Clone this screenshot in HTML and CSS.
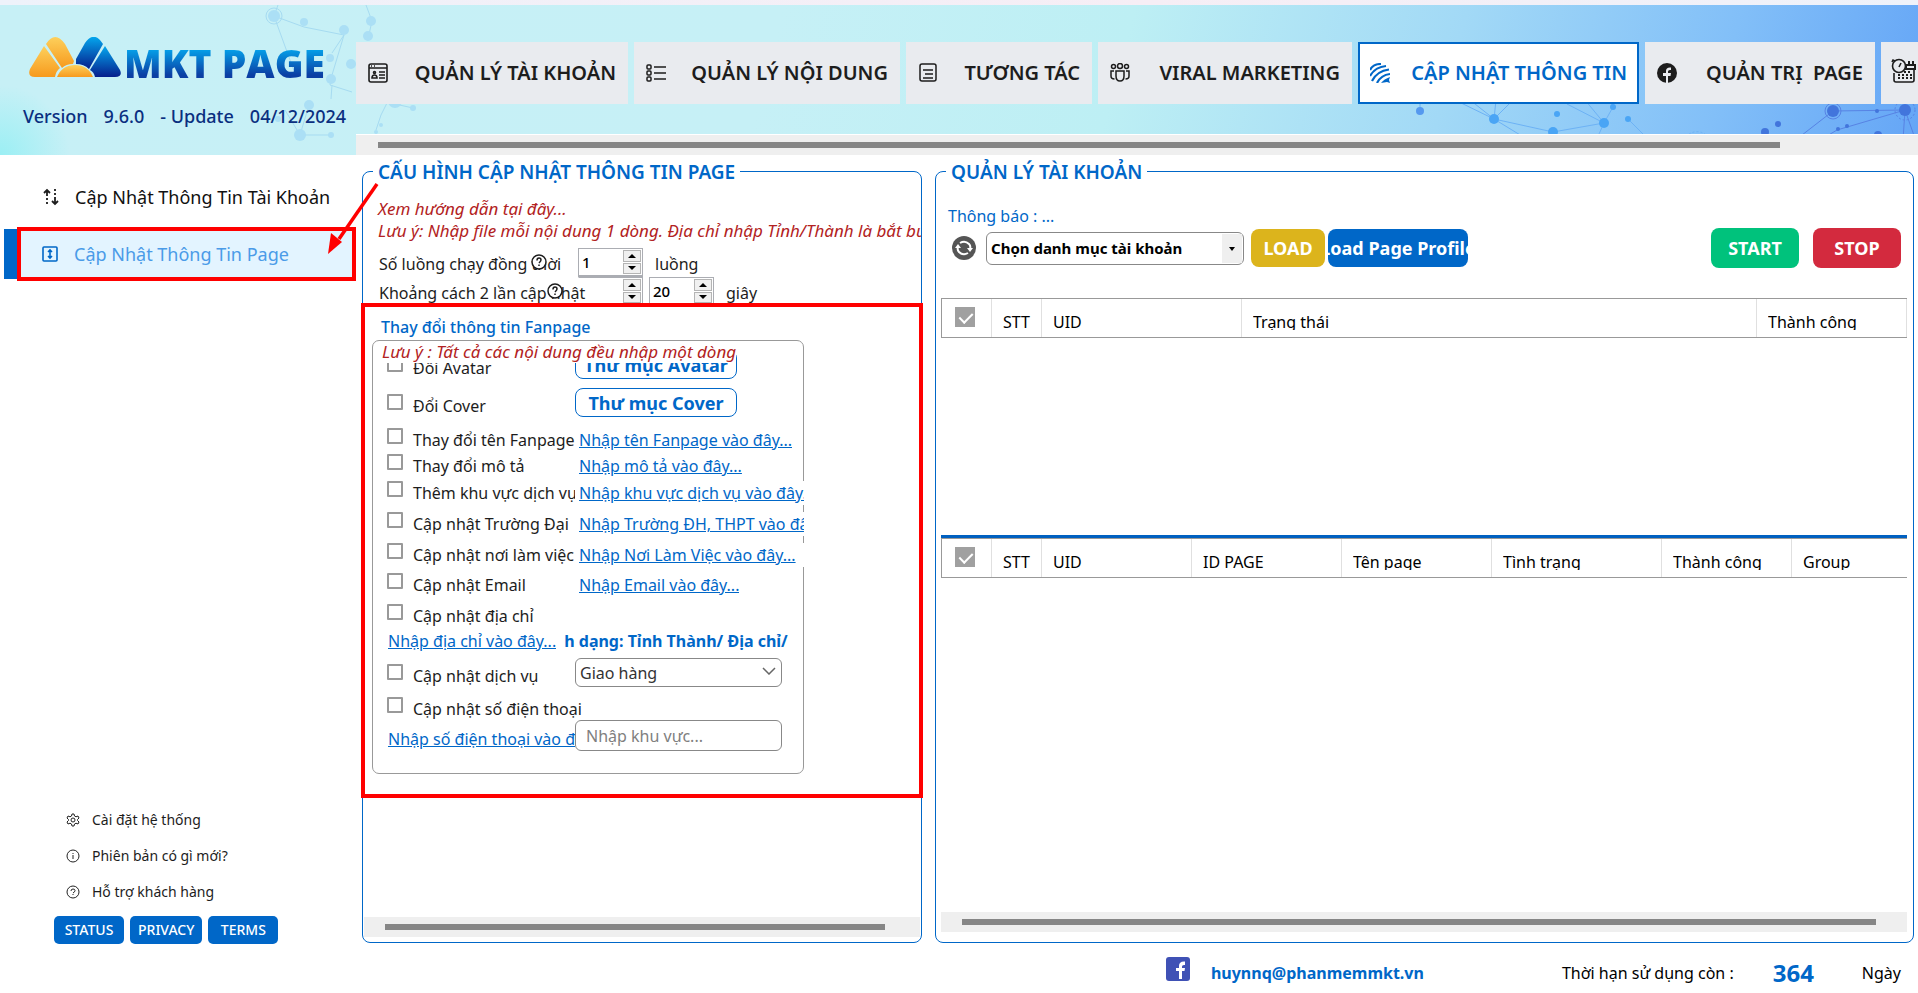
FILE: index.html
```html
<!DOCTYPE html>
<html lang="vi">
<head>
<meta charset="utf-8">
<title>MKT PAGE</title>
<link rel="stylesheet" href="styles.css">
</head>
<body>
<div class="titlebar"></div>
<header class="header">
  <svg class="decor decor-left" width="430" height="150" viewBox="0 0 430 150" aria-hidden="true">
    <g stroke="#a6dbf1" fill="none"><path d="M278 0l-4 11 30 11 40 8-12 18M274 11l20 55M344 30l-12 40-2 10 22 7M332 80l-1 14M366 0l6 16-4 18M285 105l15 25h31M300 130l9-30M376 125l5-15 10-20M395 99l18 4"/><circle cx="274" cy="11" r="8"/></g>
    <g fill="#abdff5"><circle cx="274" cy="11" r="6"/><circle cx="304" cy="17" r="4"/><circle cx="344" cy="25" r="5"/><circle cx="371" cy="16" r="5"/><circle cx="368" cy="31" r="5"/><circle cx="330" cy="53" r="4"/><circle cx="351" cy="59" r="5"/><circle cx="331" cy="74" r="5"/><circle cx="309" cy="100" r="5"/><circle cx="300" cy="130" r="6"/><circle cx="331" cy="130" r="3"/><circle cx="278" cy="114" r="3"/><circle cx="395" cy="96" r="7"/><circle cx="413" cy="103" r="3"/><circle cx="381" cy="120" r="2"/><circle cx="376" cy="127" r="2"/></g>
  </svg>
  <svg class="decor decor-right" width="518" height="150" viewBox="1400 5 518 150" aria-hidden="true">
    <g stroke="#6db2f5" fill="none"><path d="M1420 92v20M1455 100l39 19M1470 100l24 19 19-19M1496 100l-2 19 59 13 51-9 9-16-13-30M1494 119l36 22M1567 104l37 19 -10 22M1585 100l19 23M1628 119l24 24"/><path d="M1686 137a14 14 0 0 1 22 0" stroke-dasharray="2 2"/></g>
    <g stroke="#5783e4" fill="none"><path d="M1905 110l-72 1-40 31M1905 110l-68 20-20 12M1905 110l-2 30M1905 110l12 34"/><circle cx="1833" cy="111" r="8"/><circle cx="1905" cy="110" r="10" stroke-dasharray="2 2"/></g>
    <g fill="#4aa5f5"><circle cx="1420" cy="111" r="4" fill="#5599ef"/><circle cx="1494" cy="119" r="5"/><circle cx="1553" cy="132" r="5"/><circle cx="1557" cy="114" r="3"/><circle cx="1604" cy="123" r="5"/><circle cx="1613" cy="107" r="3"/><circle cx="1628" cy="119" r="3"/></g>
    <g fill="#4275dc"><circle cx="1765" cy="132" r="4"/><circle cx="1778" cy="124" r="3"/><circle cx="1833" cy="111" r="6"/><circle cx="1905" cy="110" r="6"/><circle cx="1877" cy="111" r="2"/><circle cx="1838" cy="129" r="2"/><circle cx="1847" cy="126" r="2"/><circle cx="1878" cy="135" r="4"/></g>
  </svg>
  <div class="brand">
    <div class="logo">
      <svg width="93" height="41" viewBox="0 0 93 41" aria-hidden="true">
        <defs>
          <linearGradient id="gold" x2="0" y2="1"><stop stop-color="#fdd05c"/><stop offset="1" stop-color="#f79a1d"/></linearGradient>
          <linearGradient id="blue" x2="0" y2="1"><stop stop-color="#04a7ee"/><stop offset="1" stop-color="#061e8c"/></linearGradient>
        </defs>
        <path d="M15 9L1 32q-3 8 5 8h20q1-6 5-9z" fill="url(#gold)"/>
        <path d="M17 7q9-14 19 0l9 17-1 3q-7 0-11 4z" fill="url(#gold)"/>
        <path d="M47 22L56 6q9-13 18 1L60 32q-5-5-13-5z" fill="url(#blue)"/>
        <path d="M76 9l15 24q3 7-5 7H66q-1-5-5-7z" fill="url(#blue)"/>
        <path d="M28 40q5-12 18-12t18 12z" fill="url(#gold)"/>
      </svg>
      <h1 class="brand-name">MKT PAGE</h1>
    </div>
    <p class="version"><span>Version</span><span>9.6.0</span><span>- Update</span><span>04/12/2024</span></p>
  </div>
  <div class="topnav">
    <nav class="tabs">
      <button class="tab tab-accounts" type="button">
        <svg width="20" height="22" viewBox="0 0 20 22" fill="none" stroke="#1d1d1d" stroke-width="1.600"><rect x="1" y="2" width="18" height="18" rx="2"/><path d="M1 6h18M3 4h1M6 4h1M11 10h6M11 13h6M11 16h6M4 16q0-3 2.500-3t2.500 3z"/><circle cx="6.500" cy="10.500" r="1"/></svg>
        <span>QUẢN LÝ TÀI KHOẢN</span></button>
      <button class="tab tab-content" type="button">
        <svg width="20" height="20" viewBox="0 0 20 20" fill="none" stroke="#1d1d1d" stroke-width="1.500"><rect x="1" y="2" width="4" height="4" rx="1"/><rect x="1" y="8" width="4" height="4" rx="1"/><rect x="1" y="14" width="4" height="4" rx="1"/><path d="M8 4h12M8 10h12M8 16h12"/></svg>
        <span>QUẢN LÝ NỘI DUNG</span></button>
      <button class="tab tab-interact" type="button">
        <svg width="20" height="20" viewBox="0 0 20 20" fill="none" stroke="#1d1d1d" stroke-width="1.500"><rect x="2" y="1" width="16" height="17" rx="2"/><path d="M5 7h10M7 11h8M5 15h10"/></svg>
        <span>TƯƠNG TÁC</span></button>
      <button class="tab tab-viral" type="button">
        <svg width="20" height="20" viewBox="0 0 20 20" fill="none" stroke="#1d1d1d" stroke-width="1.500"><circle cx="3.500" cy="3.500" r="2"/><circle cx="10" cy="3" r="2.500"/><circle cx="16.500" cy="3.500" r="2"/><path d="M6 8h8v5q0 5-4 5t-4-5zM4 8H1v5q0 3 3.500 3M16 8h3v5q0 3-3.500 3"/></svg>
        <span>VIRAL MARKETING</span></button>
      <button class="tab tab-update is-active" type="button">
        <svg width="20" height="20" viewBox="0 0 20 20" fill="none" stroke="#0067c8" stroke-width="2.200"><path d="M0 7Q3 1 11 1M0 13Q5 4 16 3M2 18Q7 8 19 6.500M7 20q4-8 13-9"/><path d="M11 20q3-4 9-6l-1 3 1 3-3-1z" fill="#0067c8" stroke="none"/></svg>
        <span>CẬP NHẬT THÔNG TIN</span></button>
      <button class="tab tab-page" type="button">
        <svg width="20" height="20" viewBox="0 0 20 20"><circle cx="10" cy="10" r="10" fill="#1d1d1d"/><path d="M9 20v-7H6v-3h3V8q0-4 5-3.500V7q-3-.5-3 1.500V10h3l-.5 3H11v7z" fill="#e9ebef"/></svg>
        <span>QUẢN TRỊ&nbsp; PAGE</span></button>
      <button class="tab tab-schedule" type="button" aria-label="Lịch">
        <svg width="26" height="26" viewBox="0 0 26 26" fill="none" stroke="#1d1d1d" stroke-width="1.600"><circle cx="8" cy="8" r="6.500"/><path d="M8 9l2-4M1 4l1-2 2 1M23 11v11q0 2-2 2H5q-2 0-2-2v-7"/><path d="M15 7h9v4h-9zM18 3v4M22 3v4" stroke-width="2"/><path d="M13 14h8M7 17h14M7 20h14" stroke-dasharray="2 2" stroke-width="2"/></svg>
      </button>
    </nav>
    <div class="scroll scroll-top"><div class="thumb"></div></div>
  </div>
</header>

<div class="workspace">
  <aside class="sidebar">
    <nav class="menu">
      <a class="menu-item" href="#">
        <svg width="18" height="18" viewBox="0 0 18 18" fill="none" stroke="#1d1d1d" stroke-width="1.800"><path d="M5 8V2M2 5l3-3 3 3M13 9v6M10 13l3 3 3-3"/><path d="M5 10v7M13 1v7" stroke-dasharray="2 2"/></svg>
        Cập Nhật Thông Tin Tài Khoản</a>
      <a class="menu-item is-current" href="#">
        <svg width="18" height="18" viewBox="0 0 18 18" fill="none" stroke="#0067c8" stroke-width="1.600"><rect x="2" y="2" width="14" height="14" rx="1"/><path d="M9 5v8M7 7l2-2 2 2M7 11l2 2 2-2"/></svg>
        Cập Nhật Thông Tin Page</a>
    </nav>
    <div class="support">
      <a class="support-link" href="#"><svg width="14" height="14" viewBox="0 0 14 14" fill="none" stroke="#222"><path d="M6 1h2l.5 2 1.500.8L12 3l1 2-1.500 1.500v1L13 9l-1 2-2-.8-1.500.8L8 13H6l-.5-2-1.500-.8L2 11 1 9l1.500-1.500v-1L1 5l1-2 2 .8L5.500 3z"/><circle cx="7" cy="7" r="2"/></svg>Cài đặt hệ thống</a>
      <a class="support-link" href="#"><svg width="14" height="14" viewBox="0 0 14 14" fill="none" stroke="#222"><circle cx="7" cy="7" r="6"/><path d="M7 6v4M7 4v1"/></svg>Phiên bản có gì mới?</a>
      <a class="support-link" href="#"><svg width="14" height="14" viewBox="0 0 14 14" fill="none" stroke="#222"><circle cx="7" cy="7" r="6"/><path d="M5 6q0-2 2-2t2 1.500Q9 7 7 8M7 9v1"/></svg>Hỗ trợ khách hàng</a>
      <div class="legal">
        <button class="chip" type="button">STATUS</button>
        <button class="chip" type="button">PRIVACY</button>
        <button class="chip" type="button">TERMS</button>
      </div>
    </div>
  </aside>

  <svg class="arrow" width="60" height="80" viewBox="0 0 60 80" aria-hidden="true"><path d="M52 5L14 60" stroke="#f00" stroke-width="3.500"/><path d="M3 75l3-21 11 9z" fill="#f00"/></svg>

  <fieldset class="panel panel-config">
    <legend>CẤU HÌNH CẬP NHẬT THÔNG TIN PAGE</legend>
    <div class="notes">
      <p>Xem hướng dẫn tại đây...</p>
      <p>Lưu ý: Nhập file mỗi nội dung 1 dòng. Địa chỉ nhập Tỉnh/Thành là bắt buộc</p>
    </div>
    <div class="setting">
      <label for="threads">Số luồng chạy đồng thời</label>
      <svg class="help help-threads" width="16" height="16" viewBox="0 0 16 16" fill="none" stroke="#1d1d1d" stroke-width="1.500"><circle cx="8" cy="8" r="7" fill="#fff"/><path d="M6 6.500Q6 4 8 4t2 2Q10 7 8 9M8 10.500V12"/></svg>
      <span class="spin"><input id="threads" type="number" value="1"><span class="steps"><button type="button" aria-label="Tăng"></button><button type="button" class="down" aria-label="Giảm"></button></span></span>
      <span class="unit">luồng</span>
    </div>
    <div class="setting">
      <label for="delay-from">Khoảng cách 2 lần cập nhật</label>
      <svg class="help help-delay" width="16" height="16" viewBox="0 0 16 16" fill="none" stroke="#1d1d1d" stroke-width="1.500"><circle cx="8" cy="8" r="7" fill="#fff"/><path d="M6 6.500Q6 4 8 4t2 2Q10 7 8 9M8 10.500V12"/></svg>
      <span class="spin spin-covered"><input id="delay-from" type="number"><span class="steps"><button type="button" aria-label="Tăng"></button><button type="button" class="down" aria-label="Giảm"></button></span></span>
      <span class="spin spin-second"><input type="number" value="20" aria-label="Đến"><span class="steps"><button type="button" aria-label="Tăng"></button><button type="button" class="down" aria-label="Giảm"></button></span></span>
      <span class="unit">giây</span>
    </div>
    <section class="callout">
      <h2>Thay đổi thông tin Fanpage</h2>
      <div class="options">
        <p class="hint">Lưu ý : Tất cả các nội dung đều nhập một dòng</p>
        <label class="check"><input type="checkbox"><span>Đổi Avatar</span></label>
        <button class="folder" type="button">Thư mục Avatar</button>
        <label class="check"><input type="checkbox"><span>Đổi Cover</span></label>
        <button class="folder" type="button">Thư mục Cover</button>
        <label class="check"><input type="checkbox"><span>Thay đổi tên Fanpage</span></label>
        <a class="entry" href="#">Nhập tên Fanpage vào đây...</a>
        <label class="check"><input type="checkbox"><span>Thay đổi mô tả</span></label>
        <a class="entry" href="#">Nhập mô tả vào đây...</a>
        <label class="check"><input type="checkbox"><span>Thêm khu vực dịch vụ</span></label>
        <a class="entry entry-cut" href="#">Nhập khu vực dịch vụ vào đây...</a>
        <label class="check"><input type="checkbox"><span>Cập nhật Trường Đại</span></label>
        <a class="entry entry-cut" href="#">Nhập Trường ĐH, THPT vào đây...</a>
        <label class="check"><input type="checkbox"><span>Cập nhật nơi làm việc</span></label>
        <a class="entry entry-cut" href="#">Nhập Nơi Làm Việc vào đây...</a>
        <label class="check"><input type="checkbox"><span>Cập nhật Email</span></label>
        <a class="entry" href="#">Nhập Email vào đây...</a>
        <label class="check wide"><input type="checkbox"><span>Cập nhật địa chỉ</span></label>
        <div class="address wide"><a class="entry-left" href="#">Nhập địa chỉ vào đây...</a><strong>h dạng: Tỉnh Thành/ Địa chỉ/</strong></div>
        <label class="check"><input type="checkbox"><span>Cập nhật dịch vụ</span></label>
        <div class="picker"><select aria-label="Dịch vụ"><option>Giao hàng</option></select><svg width="14" height="8" viewBox="0 0 14 8" fill="none" stroke="#666" stroke-width="1.500"><path d="M1 1l6 6 6-6"/></svg></div>
        <label class="check wide"><input type="checkbox"><span>Cập nhật số điện thoại</span></label>
        <a class="entry-left" href="#">Nhập số điện thoại vào đây...</a>
        <input class="area" type="text" placeholder="Nhập khu vực..." aria-label="Khu vực">
      </div>
    </section>
    <div class="scroll scroll-config"><div class="thumb"></div></div>
  </fieldset>

  <fieldset class="panel panel-accounts">
    <legend>QUẢN LÝ TÀI KHOẢN</legend>
    <p class="notice">Thông báo : ...</p>
    <div class="toolbar">
      <button class="refresh" type="button" aria-label="Làm mới"><svg width="24" height="24" viewBox="0 0 24 24"><circle cx="12" cy="12" r="12" fill="#555"/><g fill="none" stroke="#fff" stroke-width="2"><path d="M8 7q5-3 9 1 2 2 1 5M16 17q-5 3-9-1-2-2-1-5"/></g><path d="M15 12h6l-3 4zM3 12h6L6 8z" fill="#fff"/></svg></button>
      <div class="picker category"><select aria-label="Danh mục"><option>Chọn danh mục tài khoản</option></select><span class="caret"></span></div>
      <button class="action load" type="button">LOAD</button>
      <button class="action load-page" type="button"><span>Load Page Profile</span></button>
      <button class="action start" type="button">START</button>
      <button class="action stop" type="button">STOP</button>
    </div>
    <div class="grid-area grid-accounts">
      <table>
        <colgroup><col class="c50"><col class="c50"><col class="c200"><col><col class="c150"></colgroup>
        <thead><tr><th class="tick"><input type="checkbox" checked aria-label="Chọn tất cả tài khoản"></th><th><span>STT</span></th><th><span>UID</span></th><th><span>Trạng thái</span></th><th><span>Thành công</span></th></tr></thead>
      </table>
    </div>
    <div class="grid-area grid-pages">
      <table>
        <colgroup><col class="c50"><col class="c50"><col class="c150"><col class="c150"><col class="c150"><col class="c170"><col class="c130"><col></colgroup>
        <thead><tr><th class="tick"><input type="checkbox" checked aria-label="Chọn tất cả page"></th><th><span>STT</span></th><th><span>UID</span></th><th><span>ID PAGE</span></th><th><span>Tên page</span></th><th><span>Tình trạng</span></th><th><span>Thành công</span></th><th><span>Group</span></th></tr></thead>
      </table>
    </div>
    <div class="scroll scroll-accounts"><div class="thumb"></div></div>
  </fieldset>
</div>

<footer class="footer">
  <svg class="fb" width="24" height="24" viewBox="0 0 24 24" aria-hidden="true"><rect width="24" height="24" rx="3" fill="#3f51b5"/><path d="M13 22v-8h-3v-3h3V9q0-5 6-4.500V8q-3-.5-3 1.500V11h3l-.5 3H16v8z" fill="#fff"/></svg>
  <a class="mail" href="#">huynnq@phanmemmkt.vn</a>
  <span class="expiry">Thời hạn sử dụng còn :</span>
  <strong class="days">364</strong>
  <span>Ngày</span>
</footer>
</body>
</html>
```
FILE: styles.css
```css
* { box-sizing: border-box; }
body {
  margin: 0;
  min-height: 100vh;
  display: flex;
  flex-direction: column;
  background: #fff;
  color: #1d1d1d;
  font: 16px/24px "Noto Sans", "Open Sans", sans-serif;
  overflow-x: hidden;
}
p, h1, h2 { margin: 0; }
button, input, select { font: inherit; }
button { cursor: pointer; }
a { color: inherit; text-decoration: none; }

.titlebar { height: 5px; background: linear-gradient(90deg, #eef2fa, #f6eef5 60%, #eef2fa); }

/* Header */
.header {
  position: relative;
  display: flex;
  height: 150px;
  background:
    radial-gradient(circle at 0 100%, #9beff4 0, #9beff400 70px),
    linear-gradient(105deg, #c7f0f6 0, #c6f0f6 40%, #bdeff4 58%, #a2d9f6 75%, #82bff8 89%, #64a5f6 100%);
}
.decor { position: absolute; top: 0; }
.decor-left { left: 0; }
.decor-right { right: 0; }
.brand { position: relative; flex: none; width: 356px; padding: 32px 0 0 29px; }
.logo { display: flex; align-items: flex-end; gap: 2px; height: 41px; }
.brand-name {
  font: 800 39px/52px "Open Sans", sans-serif;
  height: 41px;
  background: linear-gradient(#04a9ef 10px, #0b3fa4 38px);
  -webkit-background-clip: text;
  background-clip: text;
  color: transparent;
  white-space: nowrap;
}
.version { display: flex; margin: 26px 0 0 -6px; color: #0a2f80; font-size: 18px; font-weight: 500; white-space: nowrap; gap: 16px; }
.topnav { position: relative; flex: 1; min-width: 0; display: flex; flex-direction: column; justify-content: space-between; padding-top: 37px; }
.tabs { display: flex; gap: 6px; overflow: hidden; }
.tab {
  flex: none;
  display: flex;
  align-items: center;
  justify-content: space-between;
  height: 62px;
  padding: 0 12px;
  border: 0;
  background: #e9ebef;
  color: #1d1d1d;
  font-size: 20px;
  font-weight: 600;
  white-space: nowrap;
}
.tab.is-active { background: #fff; border: 2px solid #0067c8; color: #0067c8; padding: 0 10px; }
.tab-accounts { width: 272px; }
.tab-content { width: 266px; }
.tab-interact { width: 186px; }
.tab-viral { width: 254px; }
.tab-update { width: 281px; }
.tab-page { width: 230px; }
.tab-schedule { padding: 0 12px 4px 10px; }
.scroll { background: #efefef; height: 20px; padding: 7px 0; }
.thumb { height: 6px; background: #868686; }
.scroll-top { border-top: 1px solid #fff; height: 21px; }
.scroll-top .thumb { margin: 0 138px 0 22px; }

/* Sidebar */
.workspace { position: relative; flex: 1; display: flex; }
.sidebar { flex: none; width: 356px; display: flex; flex-direction: column; justify-content: space-between; padding: 16px 0 0; }
.menu-item { display: flex; align-items: center; gap: 15px; height: 52px; padding-left: 42px; color: #111; font-size: 18px; white-space: nowrap; }
.menu-item.is-current {
  height: 54px;
  margin: 4px 0 0 17px;
  padding-left: 20px;
  border: 4px solid #f00;
  background: #e3f4ff;
  color: #4a9be8;
  box-shadow: -15px 0 0 -2px #0067c8;
}
.support { display: flex; flex-direction: column; }
.support-link { display: flex; align-items: center; gap: 12px; height: 36px; padding-left: 66px; font-size: 14px; }
.legal { display: flex; gap: 6px; padding: 6px 0 0 54px; }
.chip { height: 28px; min-width: 70px; padding: 0 8px; border: 0; border-radius: 5px; background: #0067c8; color: #fff; font-size: 14px; font-weight: 500; line-height: 28px; }
.legal { margin-bottom: -1px; }
.arrow { position: absolute; left: 325px; top: 24px; z-index: 4; }

/* Panels */
.panel {
  margin: 3px 0 0;
  padding: 0;
  min-width: 0;
  display: flex;
  flex-direction: column;
  border: 1px solid #0067c8;
  border-radius: 8px;
}
.panel legend { margin-left: 10px; padding: 3px 5px 0; color: #0067c8; font-size: 19px; font-weight: 600; line-height: 23px; }
.panel-config { flex: none; width: 560px; margin-left: 6px; }
.panel-accounts { flex: 1; margin: 3px 4px 0 13px; }
.notes { padding: 14px 0 6px 15px; color: #b22222; font-size: 17px; line-height: 22px; font-style: italic; white-space: nowrap; overflow: hidden; }
.setting { position: relative; display: flex; height: 29px; padding-left: 16px; line-height: 32px; white-space: nowrap; }
.setting label { flex: none; position: relative; z-index: 1; width: 199px; }
.help { position: absolute; top: 6px; z-index: 2; }
.help-threads { left: 168px; }
.help-delay { left: 184px; }
.spin { display: flex; width: 65px; height: 29px; border: 1px solid #abadb3; border-bottom-width: 2px; padding: 1px; background: #fff; }
.spin input { flex: 1; min-width: 0; padding: 0 2px; border: 0; font-size: 15px; line-height: 24px; font-weight: 500; appearance: textfield; outline: 0; }
.spin input::-webkit-inner-spin-button { appearance: none; margin: 0; }
.spin-covered { border-left-color: #fff; }
.spin-second { margin-left: 6px; }
.steps { display: flex; flex-direction: column; gap: 1px; width: 18px; }
.steps button { flex: 1; display: flex; align-items: center; justify-content: center; padding: 0; border: 1px solid #b4b4b4; background: #f0f0f0; }
.steps button::before { content: ""; border: 4px solid transparent; border-top: 0; border-bottom: 4px solid #000; }
.steps .down::before { border-top: 4px solid #000; border-bottom: 0; }
.unit { padding-left: 12px; }

.callout { position: relative; z-index: 3; margin: -3px -2px 0; padding: 10px 0 20px 7px; border: 4px solid #f00; background: #fff; }
.callout h2 { padding-left: 9px; color: #0067c8; font-size: 16px; font-weight: 500; line-height: 20px; }
.options {
  position: relative;
  display: grid;
  grid-template-columns: 188px 1fr;
  grid-template-rows: 38px 34px 26px 27px 31px 31px 30px 31px 25px 35px 33px 30px 46px;
  width: 432px;
  margin-top: 3px;
  padding: 15px 0 0 14px;
  border: 1px solid #999;
  border-radius: 7px;
  white-space: nowrap;
}
.hint { position: absolute; left: 7px; top: 1px; z-index: 1; width: 356px; height: 21px; padding-left: 2px; background: #fff; color: #b22222; font-size: 17px; font-style: italic; line-height: 20px; }
.wide { grid-column: 1 / -1; }
.check { display: flex; align-items: flex-start; gap: 10px; overflow: hidden; }
.check input { flex: none; appearance: none; width: 16px; height: 16px; margin: 0; border: 2px solid #999; border-radius: 1px; background: #fff; }
.folder { width: 162px; height: 29px; margin-top: -6px; padding: 0; border: 1px solid #0067c8; border-radius: 8px; background: #fff; color: #0067c8; font-size: 18px; font-weight: 700; line-height: 26px; }
.entry { justify-self: start; height: 24px; margin-left: 4px; overflow: hidden; color: #0067c8; text-decoration: underline; }
.entry-cut { justify-self: stretch; margin-right: -1px; background: #fff; }
.entry-left { padding-left: 1px; overflow: hidden; color: #0067c8; text-decoration: underline; }
.address { display: flex; gap: 8px; overflow: hidden; }
.address .entry-left { flex: none; }
.address strong { color: #0067c8; font-size: 16px; }
.picker { position: relative; width: 207px; height: 29px; margin-top: -6px; }
.picker select { width: 100%; height: 100%; padding: 0 4px; border: 1px solid #888; border-radius: 6px; background: #fff; color: #333; appearance: none; }
.picker svg { position: absolute; right: 6px; top: 9px; pointer-events: none; }
.area { width: 207px; height: 31px; margin-top: -7px; padding: 0 10px; border: 1px solid #888; border-radius: 6px; background: #fff; }
.area::placeholder { color: #808080; }
.scroll-config { margin: auto 1px 5px; }
.scroll-config .thumb { margin: 0 35px 0 21px; }

.notice { padding: 20px 0 0 12px; color: #0067c8; }
.toolbar { display: flex; align-items: center; height: 40px; padding: 0 12px 0 16px; }
.refresh { display: flex; padding: 0; border: 0; background: none; }
.picker.category { width: 258px; height: 33px; margin: 0 7px 0 10px; }
.category select { color: #000; font-size: 15px; font-weight: 700; }
.caret { position: absolute; right: 2px; top: 2px; width: 20px; height: 29px; background: #efefef; pointer-events: none; }
.caret::after { content: ""; position: absolute; left: 7px; top: 13px; border: 3px solid transparent; border-top: 4px solid #000; border-bottom: 0; }
.action { height: 38px; padding: 0; border: 0; border-radius: 8px; color: #fff; font-size: 18px; font-weight: 700; white-space: nowrap; overflow: hidden; }
.load { width: 74px; background: #dcb41c; }
.load-page { display: flex; justify-content: center; align-items: center; width: 140px; margin-left: 3px; background: #0067c8; }
.start { width: 88px; height: 40px; margin-left: auto; background: #00c27c; }
.stop { width: 88px; height: 40px; margin-left: 14px; background: #d32a3e; }
.grid-area { margin: 0 6px 0 5px; }
.grid-accounts { height: 237px; margin-top: 30px; }
.grid-pages { flex: 1; border-top: 3px solid #0060c0; }
table { width: 100%; table-layout: fixed; border-collapse: separate; border-spacing: 0; border: 1px solid #999; border-right: 0; }
th { height: 38px; padding: 3px 0 0 11px; border-right: 1px solid #e0e0e0; text-align: left; font-weight: 400; color: #000; }
th span { display: block; height: 20px; overflow: hidden; white-space: nowrap; line-height: 24px; }
.grid-pages th:last-child { border-right: 0; }
.tick { padding-left: 13px; }
.tick input { display: block; appearance: none; width: 20px; height: 20px; margin: -5px 0 0; background: #a0a0a0; position: relative; }
.tick input::after { content: ""; position: absolute; left: 7px; top: 3px; width: 6px; height: 11px; border: solid #fff; border-width: 0 2px 2px 0; transform: rotate(45deg); }
.c50 { width: 50px; }
.c130 { width: 130px; }
.c150 { width: 150px; }
.c170 { width: 170px; }
.c200 { width: 200px; }
.scroll-accounts { margin: 0 6px 10px 5px; }
.scroll-accounts .thumb { margin: 0 31px 0 21px; }

.footer { flex: none; display: flex; align-items: center; height: 50px; padding: 10px 17px 0 0; color: #000; font-size: 16px; white-space: nowrap; }
.fb { margin: -8px 21px 0 auto; }
.mail { color: #0067c8; font-weight: 700; }
.expiry { margin-left: 138px; }
.days { margin: 0 48px 0 39px; color: #0067c8; font-size: 24px; }
```
